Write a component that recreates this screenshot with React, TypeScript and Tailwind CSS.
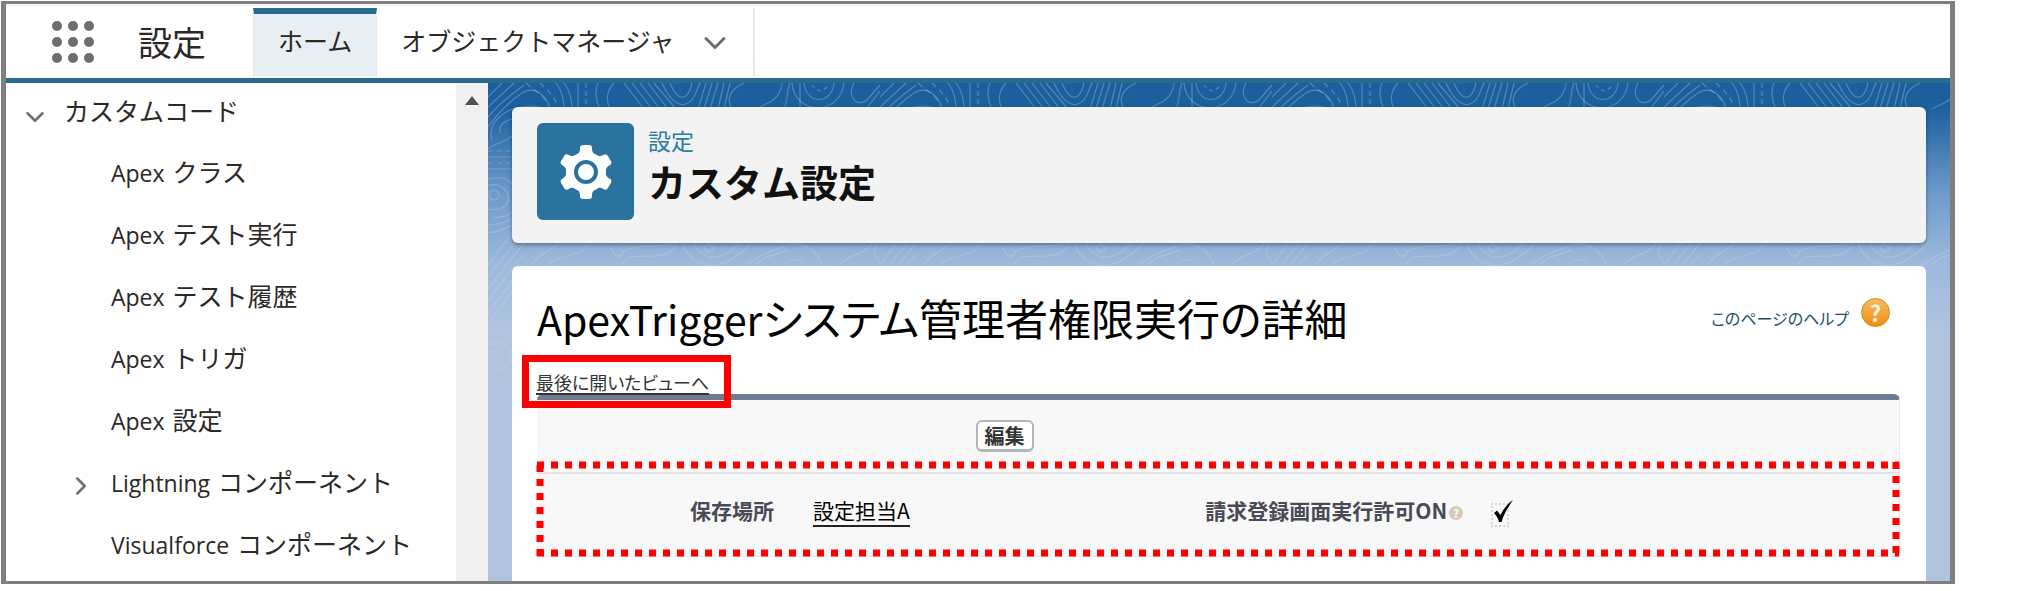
import { ChevronDown, ChevronRight } from "lucide-react";

const menuItems = [
  { latin: "Apex", label: "クラス" },
  { latin: "Apex", label: "テスト実行" },
  { latin: "Apex", label: "テスト履歴" },
  { latin: "Apex", label: "トリガ" },
  { latin: "Apex", label: "設定" },
  { latin: "Lightning", label: "コンポーネント", expandable: true },
  { latin: "Visualforce", label: "コンポーネント" },
];

function AppLauncherIcon() {
  return (
    <svg width="42" height="42" viewBox="0 0 42 42" fill="#706e6b" aria-hidden="true">
      {[5, 21, 37].map((y) => [5, 21, 37].map((x) => <circle key={`${x}-${y}`} cx={x} cy={y} r="5" />))}
    </svg>
  );
}

function GearIcon() {
  return (
    <svg width="56" height="56" viewBox="-28 -28 56 56" aria-hidden="true">
      <g fill="#fff">
        <circle r="20" />
        {[0, 60, 120, 180, 240, 300].map((a) => (
          <path
            key={a}
            transform={`rotate(${a})`}
            d="M-12 -16C-7 -18 -6 -20 -6 -24Q-6 -27 -3 -27H3Q6 -27 6 -24C6 -20 7 -18 12 -16Z"
          />
        ))}
      </g>
      <circle r="10" fill="#fff" stroke="#2a739e" strokeWidth="4" />
    </svg>
  );
}

// Contour lines behind the cards
function Topography() {
  return (
    <svg className="absolute inset-0 h-full w-full" aria-hidden="true">
      <defs>
        <pattern id="topo" width="392" height="360" patternUnits="userSpaceOnUse">
          <g fill="none" stroke="#fff" strokeOpacity="0.25" strokeWidth="1.2">
            <path d="M0 14 14 0M0 24 26 0M0 34C10 22 22 12 36 2M0 44C10 30 22 18 34 10C44 4 54 8 60 20" />
            <path d="M4 56C0 46 8 34 20 28C34 22 48 22 56 26M12 50C10 42 18 36 28 36M0 66C10 58 20 60 26 50" />
            <path d="M38 0C44 6 54 10 62 24M52 0C58 6 66 12 70 24" strokeDasharray="6 4" />
            <path d="M68 0C74 8 76 16 76 26M76 0C82 8 84 16 84 26M90 0V26M110 0C106 10 108 18 112 26M126 0C118 8 118 18 122 26" />
            <path d="M98 0V26" strokeDasharray="5 3" />
            <path d="M136 0 156 26M144 0 164 26M152 0 172 26M160 0 180 26M166 0 188 26M174 0C184 22 196 28 206 14L212 0M182 0C190 20 200 18 204 0" />
            <path d="M218 0 210 26M224 0 216 26M230 0 222 26M236 0 230 26M242 0 236 26" />
            <path d="M256 0C242 6 238 16 244 26M294 0C292 20 276 20 268 26M302 0C298 10 300 18 296 26M312 0V24" />
            <path d="M304 0C306 32 352 34 356 0M316 0C318 22 344 22 346 0" />
            <path d="M324 2Q331 12 339 4" strokeDasharray="4 3" />
            <path d="M366 0C358 14 370 26 380 16L392 2M378 26 392 8" />
            <path d="M0 74H40M0 86H36M0 96C16 92 26 98 30 112C32 126 20 136 6 134M0 102C14 100 22 108 20 118C18 126 8 128 0 126" />
            <path d="M0 68H40M0 80H40" strokeDasharray="5 4" />
            <circle cx="6" cy="112" r="5" />
            <path d="M0 142C14 142 30 136 40 122M0 150C16 148 30 140 40 130M0 182 24 150M0 194 30 156M0 206 36 160M0 218 36 170M0 230 30 190M0 242 24 208" />
            <path d="M122 164Q130 180 136 168C150 160 170 166 186 160M134 182C142 166 164 178 180 170Q188 166 188 160" />
            <path d="M194 160C200 178 218 188 236 180C252 174 258 164 264 160M206 160C212 174 226 178 240 170L252 160M216 164Q222 158 226 166Q220 174 216 164" />
            <path d="M258 182C270 172 284 168 300 162C318 158 330 168 334 184M296 184C300 174 314 174 318 184M268 182C278 170 290 174 300 166" />
            <path d="M352 182C360 170 378 172 384 160M392 180C384 170 386 164 390 160" />
            <path d="M60 182C70 170 90 176 100 162M44 182C50 170 62 170 70 160" />
            <path d="M0 262C14 256 26 264 22 278C18 288 6 288 0 284M0 270C8 266 14 272 12 278" />
            <circle cx="352" cy="64" r="8" />
          </g>
        </pattern>
        <linearGradient id="topoFade" x1="0" y1="0" x2="0" y2="1">
          <stop offset="0" stopColor="#fff" />
          <stop offset="1" stopColor="#fff" stopOpacity="0.2" />
        </linearGradient>
        <mask id="topoMask">
          <rect width="100%" height="360" fill="url(#topoFade)" />
        </mask>
      </defs>
      <rect width="100%" height="340" fill="url(#topo)" mask="url(#topoMask)" />
    </svg>
  );
}

// Square-dotted marker around the field row
function DottedFrame() {
  return (
    <svg className="pointer-events-none absolute inset-0 h-full w-full overflow-visible" aria-hidden="true">
      <g stroke="#ff0000" strokeWidth="7" strokeDasharray="7 7">
        <line x1="0" y1="-9" x2="100%" y2="-9" />
        <line x1="0" y1="79" x2="100%" y2="79" />
        <line x1="3" y1="-9" x2="3" y2="82" />
        <line x1="100%" y1="-12" x2="100%" y2="82" transform="translate(-3 0)" />
      </g>
    </svg>
  );
}

function Header() {
  return (
    <header className="flex h-[79px] items-stretch border-t-2 border-b-[5px] border-t-gray-100 border-b-[#2b6a8f] bg-white">
      <button type="button" className="ml-[46px]" aria-label="アプリケーションランチャー">
        <AppLauncherIcon />
      </button>
      <span className="ml-[44px] self-center text-[34px] leading-none">設定</span>
      <nav className="ml-[47px] flex pt-0.5 pb-0.5">
        <a href="#home" className="flex items-center border-x border-t-[6px] border-x-gray-200 border-t-[#2b6a8f] bg-[#e8eff4] px-6 pb-2">
          ホーム
        </a>
        <a href="#objects" className="flex items-center border-r-2 border-gray-200 pr-5 pb-0.5 pl-6">
          オブジェクトマネージャ
          <ChevronDown className="mt-1 ml-[22px] size-9 text-[#706e6b]" strokeWidth={2} />
        </a>
      </nav>
    </header>
  );
}

function Sidebar() {
  return (
    <aside className="flex w-[482px] shrink-0 bg-white">
      <nav className="flex-1">
        <a href="#custom-code" className="flex h-[60px] items-center pb-1 pl-[14px]">
          <ChevronDown className="mt-3 size-[30px] text-[#706e6b]" strokeWidth={2} />
          <span className="ml-[14px]">カスタムコード</span>
        </a>
        <ul>
          {menuItems.map((item) => (
            <li key={item.latin + item.label}>
              <a href="#item" className="flex h-[62px] items-center pb-1 pl-[60px]">
                <span className="w-[45px]">
                  {item.expandable && <ChevronRight className="mt-2 size-[30px] text-[#706e6b]" strokeWidth={2} />}
                </span>
                <span>
                  <span className="mr-2 font-['Open_Sans'] text-[23px]">{item.latin}</span>
                  {item.label}
                </span>
              </a>
            </li>
          ))}
        </ul>
      </nav>
      <div className="flex w-8 justify-center bg-[#f0f0f0] pt-[13px]">
        <svg width="14" height="9" viewBox="0 0 14 9" fill="#505050" aria-hidden="true">
          <path d="M7 0 14 9H0Z" />
        </svg>
      </div>
    </aside>
  );
}

function PageHeader() {
  return (
    <section className="flex h-[136px] rounded-md bg-[#f3f3f3] pt-4 pl-[25px] shadow-[0_2px_4px_rgba(0,0,0,0.35)]">
      <div className="flex size-[97px] items-center justify-center rounded-md bg-[#2a739e]">
        <GearIcon />
      </div>
      <div className="ml-[14px]">
        <p className="text-[23px] leading-[34px] text-[#2a7ba6]">設定</p>
        <h1 className="text-[38px] leading-[48px] font-bold text-[#111]">カスタム設定</h1>
      </div>
    </section>
  );
}

function Detail() {
  return (
    <section className="flex-1 rounded-t-md bg-white pr-[26px] pb-6 pl-[25px] text-[21px]">
      <div className="flex h-[89px] items-start justify-between pt-5">
        <h2 className="text-[43px] leading-[62px] text-black [font-feature-settings:'palt']">
          <span className="text-[41px]">ApexTrigger</span>システム管理者権限実行の詳細
        </h2>
        <a href="#help" className="mr-[10px] flex items-center gap-3 pt-2 text-[16px] text-[#15506f]">
          <span className="pt-3 leading-6 [font-feature-settings:'palt']">このページのヘルプ</span>
          <span className="flex size-[29px] items-center justify-center rounded-full border border-[#c98a2a] bg-linear-to-b from-[#f4bd5c] to-[#ee8d00] text-[22px] leading-none font-bold text-[#fff3dc]">
            ?
          </span>
        </a>
      </div>
      <div className="relative z-10 -ml-[15px] flex h-[53px] w-[209px] border-[7px] border-[#ff0000] pt-2 pl-[7px]">
        <a
          href="#back"
          className="h-[25px] border-b-2 border-[#333] text-[18px] leading-6 text-[#333] [font-feature-settings:'palt']"
        >
          最後に開いたビューへ
        </a>
      </div>
      <div className="-mt-[14px] rounded-t-md border-t-[6px] border-r border-b border-gray-200 border-t-[#6f7b90] bg-[#f8f8f8]">
        <div className="flex h-[72px] items-start pt-5 pl-[32.2%]">
          <button
            type="button"
            className="h-8 rounded-md border-2 border-b-[3px] border-[#b5b5b5] bg-white px-[7px] text-[20px] leading-6 font-bold text-[#333]"
          >
            編集
          </button>
        </div>
        <div className="relative grid h-[84px] grid-cols-[17.4%_33%_17.6%_1fr] items-center border-t-2 border-[#e3e3e3] pb-2 whitespace-nowrap">
          <DottedFrame />
          <span className="text-right font-bold text-[#4a4a56]">保存場所</span>
          <span className="pl-[39px]">
            <a href="#owner" className="border-b-2 border-[#222] text-black">
              設定担当A
            </a>
          </span>
          <label htmlFor="permit" className="flex items-center justify-end gap-0.5 font-bold text-[#4a4a56]">
            請求登録画面実行許可ON
            <span className="mt-1 flex size-[14px] shrink-0 items-center justify-center rounded-full bg-[#d6cbb8] text-[11px] leading-none text-white">
              ?
            </span>
          </label>
          <span className="relative mt-2 ml-7 h-6 w-6">
            <input
              id="permit"
              type="checkbox"
              defaultChecked
              className="block h-6 w-[18px] appearance-none border-2 border-dotted border-[#d8d8d8]"
            />
            <svg className="pointer-events-none absolute -top-1 left-0.5" width="24" height="26" viewBox="0 0 24 26" aria-hidden="true">
              <path d="M1 14 4 11.500 7.500 16C11 9 15 4 20 1C15 8 11 15 8.500 23L6 23C5 19 3 16 1 14Z" fill="#000" />
            </svg>
          </span>
        </div>
      </div>
    </section>
  );
}

export default function App() {
  return (
    <div className="bg-white p-px pr-[72px] font-['Noto_Sans_CJK_JP',sans-serif] text-[25px] text-[#2b2826]">
      <div className="border-x-[5px] border-y-[3px] border-[#7f7f7f]">
        <Header />
        <div className="flex">
          <Sidebar />
          <main className="relative min-w-0 flex-1 bg-[linear-gradient(#1b5f9e_0px,#1b5f9e_24px,#6d9bcb_110px,#9db9dc_180px,#b0c4df_250px)]">
            <Topography />
            <div className="relative flex h-full flex-col gap-[23px] px-[24px] pt-6">
              <PageHeader />
              <Detail />
            </div>
          </main>
        </div>
      </div>
    </div>
  );
}
